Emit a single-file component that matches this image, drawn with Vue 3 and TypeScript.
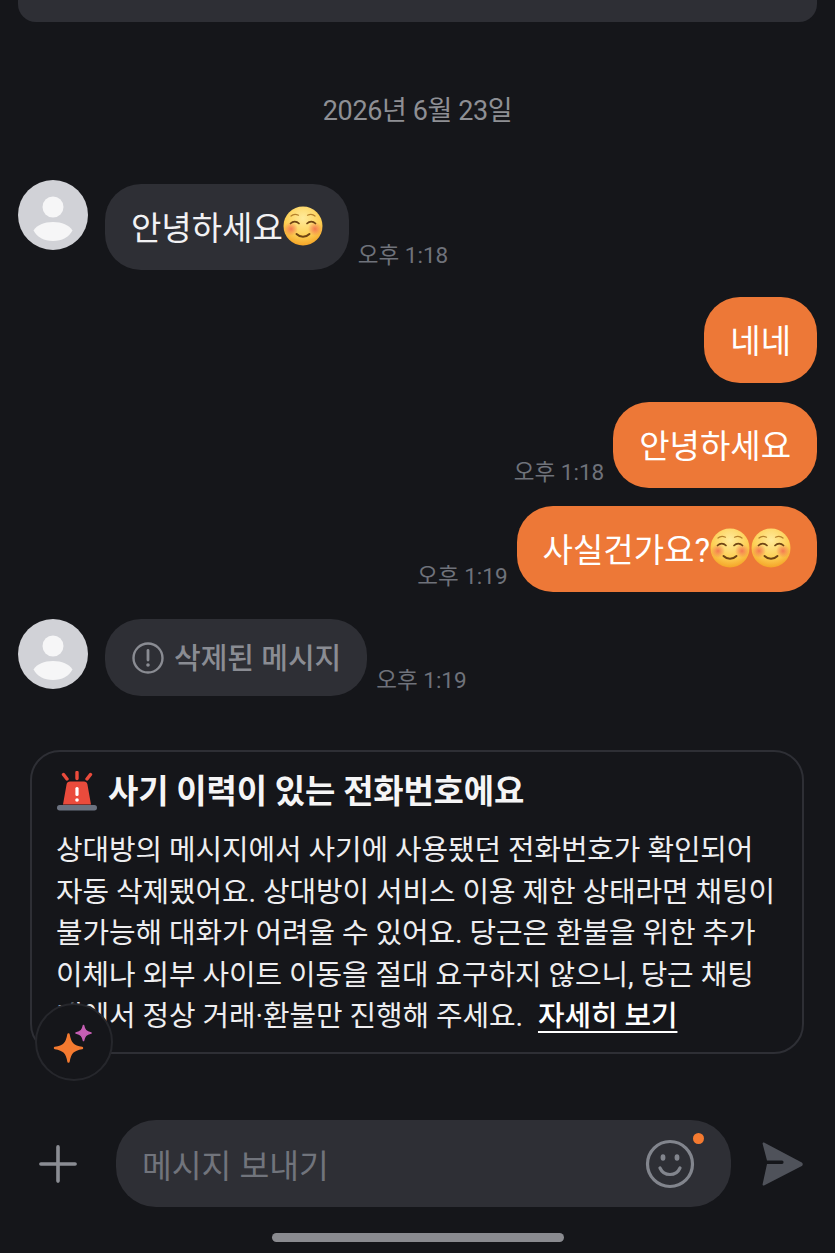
<script setup lang="ts">
// Lines of the warning notice, kept apart so the breaks match the reference.
const noticeLines: string[] = [
  '상대방의 메시지에서 사기에 사용됐던 전화번호가 확인되어',
  '자동 삭제됐어요. 상대방이 서비스 이용 제한 상태라면 채팅이',
  '불가능해 대화가 어려울 수 있어요. 당근은 환불을 위한 추가',
  '이체나 외부 사이트 이동을 절대 요구하지 않으니, 당근 채팅',
]
</script>

<template>
  <div class="page">
    <div class="top-card"></div>

    <div class="date">2026년 6월 23일</div>

    <div class="row row-first">
      <svg class="avatar" viewBox="0 0 70 70">
        <circle cx="35" cy="35" r="35" fill="#d1d2d7" />
        <circle cx="35" cy="27" r="10.5" fill="#f6f6f7" />
        <path d="M15.5 50.5C19 45 26 42 35 42s16 3 19.5 8.5C51 57 44 61 35 61s-16-4-19.5-10.5z" fill="#f6f6f7" />
      </svg>
      <div class="bubble theirs first-bubble">
        <span>안녕하세요</span>
        <svg class="emoji" viewBox="0 0 40 40">
          <defs>
            <radialGradient id="face" cx="50%" cy="30%" r="75%">
              <stop offset="0%" stop-color="#ffeb9c" />
              <stop offset="60%" stop-color="#fdd055" />
              <stop offset="100%" stop-color="#f39c1e" />
            </radialGradient>
            <radialGradient id="blush">
              <stop offset="0%" stop-color="#f26a4f" stop-opacity=".85" />
              <stop offset="100%" stop-color="#f26a4f" stop-opacity="0" />
            </radialGradient>
          </defs>
          <circle cx="20" cy="20" r="19.5" fill="url(#face)" />
          <circle cx="8" cy="23" r="7" fill="url(#blush)" />
          <circle cx="32" cy="23" r="7" fill="url(#blush)" />
          <path d="M8 10c2-1.800 5-2 7.500-.8M24.500 9.200c2.500-1.200 5.500-1 7.500.8" fill="none" stroke="#b5802c" stroke-width="1.200" stroke-linecap="round" />
          <path d="M7.500 17.500c2.500-2.600 6-2.600 8.500 0M24 17.500c2.500-2.600 6-2.600 8.500 0" fill="none" stroke="#6e4414" stroke-width="1.700" stroke-linecap="round" />
          <path d="M13.500 28c3.500 3.600 9.500 3.600 13 0" fill="none" stroke="#6e4414" stroke-width="1.900" stroke-linecap="round" />
        </svg>
      </div>
      <span class="time first-time">오후 1:18</span>
    </div>

    <div class="row mine row-ne">
      <div class="bubble own">네네</div>
    </div>

    <div class="row mine row-hello">
      <span class="time">오후 1:18</span>
      <div class="bubble own">안녕하세요</div>
    </div>

    <div class="row mine row-real">
      <span class="time">오후 1:19</span>
      <div class="bubble own">
        <span>사실건가요?</span>
        <svg class="emoji" viewBox="0 0 40 40">
          <circle cx="20" cy="20" r="19.5" fill="url(#face)" />
          <circle cx="8" cy="23" r="7" fill="url(#blush)" />
          <circle cx="32" cy="23" r="7" fill="url(#blush)" />
          <path d="M8 10c2-1.800 5-2 7.500-.8M24.500 9.200c2.500-1.200 5.500-1 7.500.8" fill="none" stroke="#b5802c" stroke-width="1.200" stroke-linecap="round" />
          <path d="M7.500 17.500c2.500-2.600 6-2.600 8.500 0M24 17.500c2.500-2.600 6-2.600 8.500 0" fill="none" stroke="#6e4414" stroke-width="1.700" stroke-linecap="round" />
          <path d="M13.500 28c3.500 3.600 9.500 3.600 13 0" fill="none" stroke="#6e4414" stroke-width="1.900" stroke-linecap="round" />
        </svg>
        <svg class="emoji" viewBox="0 0 40 40">
          <circle cx="20" cy="20" r="19.5" fill="url(#face)" />
          <circle cx="8" cy="23" r="7" fill="url(#blush)" />
          <circle cx="32" cy="23" r="7" fill="url(#blush)" />
          <path d="M8 10c2-1.800 5-2 7.500-.8M24.500 9.200c2.500-1.200 5.500-1 7.500.8" fill="none" stroke="#b5802c" stroke-width="1.200" stroke-linecap="round" />
          <path d="M7.500 17.500c2.500-2.600 6-2.600 8.500 0M24 17.500c2.500-2.600 6-2.600 8.500 0" fill="none" stroke="#6e4414" stroke-width="1.700" stroke-linecap="round" />
          <path d="M13.500 28c3.500 3.600 9.500 3.600 13 0" fill="none" stroke="#6e4414" stroke-width="1.900" stroke-linecap="round" />
        </svg>
      </div>
    </div>

    <div class="row row-deleted">
      <svg class="avatar" viewBox="0 0 70 70">
        <circle cx="35" cy="35" r="35" fill="#d1d2d7" />
        <circle cx="35" cy="27" r="10.5" fill="#f6f6f7" />
        <path d="M15.5 50.5C19 45 26 42 35 42s16 3 19.5 8.5C51 57 44 61 35 61s-16-4-19.5-10.5z" fill="#f6f6f7" />
      </svg>
      <div class="bubble theirs deleted">
        <svg class="alert-icon" viewBox="0 0 32 32">
          <circle cx="16" cy="16" r="14.500" fill="none" stroke="#8a8c93" stroke-width="2.400" />
          <path d="M16 8.500v9.500" stroke="#8a8c93" stroke-width="2.800" stroke-linecap="round" />
          <circle cx="16" cy="23" r="1.800" fill="#8a8c93" />
        </svg>
        <span class="deleted-text">삭제된 메시지</span>
      </div>
      <span class="time deleted-time">오후 1:19</span>
    </div>

    <section class="notice">
      <h2 class="notice-title">
        <svg class="siren" viewBox="0 0 42 42">
          <path d="M7.500 3.500l3.500 4.500M21 1.500v6M34.500 3.500l-3.500 4.500" stroke="#ea4b3c" stroke-width="3.400" stroke-linecap="round" />
          <path d="M14 10.500h14c1.800 0 3 1 3.400 2.800l3.600 20.200H7l3.600-20.200c.4-1.800 1.600-2.800 3.400-2.800z" fill="#ea4b3c" />
          <rect x="19.400" y="16" width="3.200" height="9" rx="1.500" fill="#fff" />
          <circle cx="21" cy="29" r="1.800" fill="#fff" />
          <rect x="1" y="34" width="40" height="5.500" rx="2.700" fill="#6b7280" />
        </svg>
        <span>사기 이력이 있는 전화번호에요</span>
      </h2>
      <p v-for="line in noticeLines" :key="line" class="notice-line">{{ line }}</p>
      <p class="notice-line">내에서 정상 거래·환불만 진행해 주세요.&nbsp;<a class="more">자세히 보기</a></p>

      <button class="spark-button" aria-label="AI">
        <svg width="60" height="60" viewBox="0 0 60 60">
          <path d="M24.500 22.500c1.500 9 4.500 12 13.500 13.500-9 1.500-12 4.500-13.500 13.500C23 40.500 20 37.500 11 36c9-1.500 12-4.500 13.500-13.500z" fill="#f47a30" stroke="#f47a30" stroke-width="2.400" stroke-linejoin="round" />
          <path d="M39.500 13.500c.8 4.500 2.500 6.500 7.500 7.500-5 1-6.700 3-7.500 7.500-.8-4.500-2.500-6.500-7.500-7.500 5-1 6.700-3 7.500-7.500z" fill="#c65fb4" stroke="#c65fb4" stroke-width="1.600" stroke-linejoin="round" />
        </svg>
      </button>
    </section>

    <footer class="composer">
      <svg class="plus" viewBox="0 0 40 40">
        <path d="M20 2v36M2 20h36" stroke="#8b8d94" stroke-width="3.800" stroke-linecap="round" />
      </svg>
      <div class="input">
        <span class="placeholder">메시지 보내기</span>
        <div class="smile-wrap">
          <svg class="smile" viewBox="0 0 50 50">
            <circle cx="25" cy="25" r="22.500" fill="none" stroke="#82858d" stroke-width="3.200" />
            <ellipse cx="18" cy="18.500" rx="2.400" ry="3.300" fill="#82858d" />
            <ellipse cx="32" cy="18.500" rx="2.400" ry="3.300" fill="#82858d" />
            <path d="M15 29c2 4.500 5.500 6.500 10 6.500s8-2 10-6.500" fill="none" stroke="#82858d" stroke-width="3.200" stroke-linecap="round" />
          </svg>
          <i class="dot"></i>
        </div>
      </div>
      <svg class="send" viewBox="0 0 42 46">
        <path d="M3 1.500c-.8-.4-1.600.3-1.400 1.200L6 19.500h15c2 0 2 3.500 0 3.500H6L1.600 43.300c-.2.900.6 1.600 1.400 1.200l37.800-19.600c1.300-.7 1.300-2.700 0-3.400z" fill="#4f525a" />
      </svg>
    </footer>

    <div class="home-bar"></div>
  </div>
</template>

<style scoped>
.page {
  position: relative;
  width: 835px;
  height: 1253px;
  overflow: hidden;
  background: #15161a;
  font-family: Roboto, "Noto Sans CJK KR", sans-serif;
  color: #f2f2f4;
  display: flex;
  flex-direction: column;
}

.top-card {
  height: 22px;
  margin: 0 18px;
  flex-shrink: 0;
  background: #2e2f35;
  border-radius: 0 0 18px 18px;
}

.date {
  margin-top: 67px;
  height: 44px;
  line-height: 44px;
  text-align: center;
  font-size: 27px;
  letter-spacing: -0.4px;
  color: #8e8f94;
  flex-shrink: 0;
}

.row {
  display: flex;
  align-items: flex-start;
  padding: 0 18px;
  flex-shrink: 0;
}

.row-first { margin-top: 47px; }
.row-ne { margin-top: 26px; }
.row-hello { margin-top: 19px; }
.row-real { margin-top: 18px; }
.row-deleted { margin-top: 27px; }

.mine {
  justify-content: flex-end;
  align-items: flex-end;
}

.avatar {
  width: 70px;
  height: 70px;
  flex-shrink: 0;
}

.bubble {
  height: 86px;
  display: flex;
  align-items: center;
  padding: 0 26px 2px;
  border-radius: 36px;
  font-size: 33px;
  box-sizing: border-box;
}

.theirs {
  background: #2e2f35;
  margin-left: 17px;
}

.first-bubble {
  margin-top: 4px;
}

.own {
  background: #ed7837;
  color: #fff;
}

.emoji {
  width: 40px;
  height: 40px;
  flex-shrink: 0;
}

.emoji + .emoji {
  margin-left: 1px;
}

.time {
  font-size: 22.5px;
  line-height: 30px;
  color: #6f727a;
  margin: 0 9px 1px;
  white-space: nowrap;
}

.first-time {
  margin-top: 60px;
}

.deleted {
  height: 77px;
  padding: 0 26px 0 27px;
  color: #8a8c93;
  font-size: 29px;
  font-weight: 500;
  gap: 10px;
}

.deleted-text {
  margin-bottom: 3px;
}

.deleted-time {
  margin-top: 46px;
}

.alert-icon {
  width: 32px;
  height: 32px;
  flex-shrink: 0;
}

.notice {
  position: relative;
  box-sizing: border-box;
  margin: 54px 31px 0 30px;
  height: 304px;
  padding: 16px 0 0 24px;
  border: 2px solid #2e2f35;
  border-radius: 30px;
  flex-shrink: 0;
}

.notice-title {
  display: flex;
  align-items: center;
  gap: 10px;
  margin: 0 0 20px;
  height: 42px;
  font-size: 33px;
  font-weight: 700;
  color: #f5f5f6;
  letter-spacing: -0.2px;
}

.siren {
  width: 42px;
  height: 42px;
  margin-top: 6px;
  flex-shrink: 0;
}

.notice-line {
  margin: 0;
  height: 41.6px;
  line-height: 41.6px;
  font-size: 28.9px;
  letter-spacing: -0.1px;
  color: #eeeef0;
  white-space: nowrap;
}

.more {
  font-weight: 500;
  color: #fff;
  text-decoration: underline;
  text-underline-offset: 5px;
  margin-left: 8px;
}

.spark-button {
  position: absolute;
  left: 3px;
  top: 251px;
  width: 78px;
  height: 78px;
  padding: 0;
  display: flex;
  align-items: center;
  justify-content: center;
  background: #15161a;
  border: 2px solid #26272c;
  border-radius: 50%;
}

.composer {
  display: flex;
  align-items: center;
  margin-top: 66px;
  height: 87px;
  padding-left: 39px;
  flex-shrink: 0;
}

.plus {
  width: 38px;
  height: 38px;
  flex-shrink: 0;
}

.input {
  width: 615px;
  height: 87px;
  margin-left: 39px;
  padding: 0 36px 0 26px;
  box-sizing: border-box;
  display: flex;
  align-items: center;
  justify-content: space-between;
  background: #2e2f35;
  border-radius: 40px;
  flex-shrink: 0;
}

.placeholder {
  font-size: 32.4px;
  color: #71747c;
}

.smile-wrap {
  position: relative;
  width: 50px;
  height: 50px;
}

.smile {
  display: block;
  width: 50px;
  height: 50px;
}

.dot {
  position: absolute;
  left: 48px;
  top: -6px;
  width: 11px;
  height: 11px;
  border-radius: 50%;
  background: #f47a30;
}

.send {
  width: 42px;
  height: 46px;
  margin-left: 30px;
  flex-shrink: 0;
}

.home-bar {
  width: 292px;
  height: 9px;
  margin: 26px auto 0;
  flex-shrink: 0;
  background: #8a8b90;
  border-radius: 5px;
}
</style>

<style>
html, body {
  margin: 0;
  background: #15161a;
}
</style>
